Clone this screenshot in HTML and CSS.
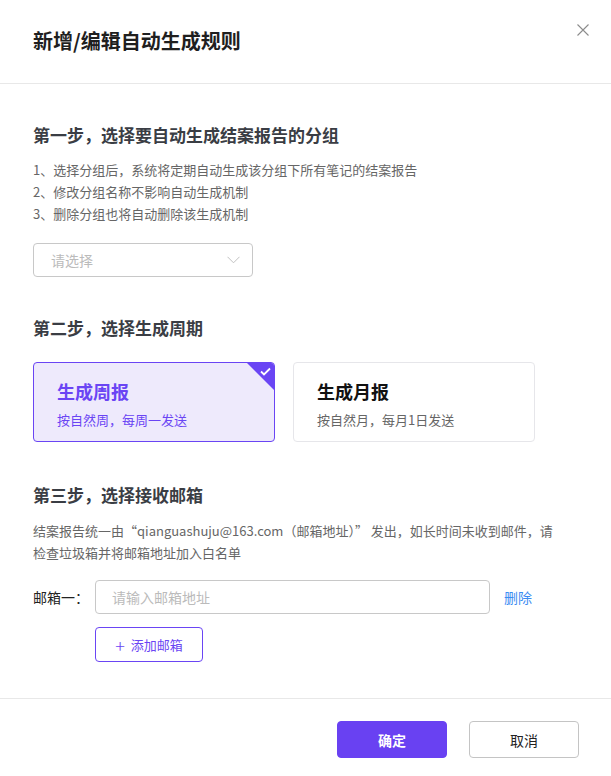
FILE: index.html
```html
<!DOCTYPE html>
<html lang="zh-CN">
<head>
  <meta charset="UTF-8">
  <title>新增/编辑自动生成规则</title>
  <link rel="stylesheet" href="styles.css">
</head>
<body>
  <div class="dialog">
    <div class="dialog-header">
      <h2 class="dialog-title">新增/编辑自动生成规则</h2>
      <span class="close">
        <svg width="12" height="12" viewBox="0 0 12 12"><path d="M0.5 0.5L11.5 11.5M11.5 0.5L0.5 11.5" stroke="#8c8c8c" stroke-width="1.1" fill="none"/></svg>
      </span>
    </div>

    <div class="dialog-body">
      <h3 class="step-title first">第一步，选择要自动生成结案报告的分组</h3>
      <div class="tips">
        <p>1、选择分组后，系统将定期自动生成该分组下所有笔记的结案报告</p>
        <p>2、修改分组名称不影响自动生成机制</p>
        <p>3、删除分组也将自动删除该生成机制</p>
      </div>
      <div class="select">
        <span class="placeholder">请选择</span>
        <svg width="13" height="8" viewBox="0 0 13 8"><path d="M0.5 0.8L6.5 6.8L12.5 0.8" stroke="#c0c0c0" stroke-width="1" fill="none"/></svg>
      </div>

      <h3 class="step-title">第二步，选择生成周期</h3>
      <div class="cards">
        <div class="card active">
          <div class="card-name">生成周报</div>
          <div class="card-desc">按自然周，每周一发送</div>
          <span class="corner"></span>
          <svg class="tick" width="11" height="9" viewBox="0 0 11 9"><path d="M1 4.5L4 7.5L10 1.5" stroke="#fff" stroke-width="1.8" fill="none"/></svg>
        </div>
        <div class="card">
          <div class="card-name">生成月报</div>
          <div class="card-desc">按自然月，每月1日发送</div>
        </div>
      </div>

      <h3 class="step-title">第三步，选择接收邮箱</h3>
      <p class="mail-tip">结案报告统一由“qianguashuju@163.com（邮箱地址）” 发出，如长时间未收到邮件，请检查垃圾箱并将邮箱地址加入白名单</p>
      <div class="mail-row">
        <label class="mail-label">邮箱一：</label>
        <input class="mail-input" type="text" placeholder="请输入邮箱地址">
        <a class="remove" href="#">删除</a>
      </div>
      <button class="add-btn" type="button"><span class="plus">+</span>添加邮箱</button>
    </div>

    <div class="dialog-footer">
      <button class="btn primary" type="button">确定</button>
      <button class="btn" type="button">取消</button>
    </div>
  </div>
</body>
</html>
```

FILE: styles.css
```css
* {
  box-sizing: border-box;
}
body {
  margin: 0;
  background: #fff;
  font-family: "Noto Sans CJK SC", "Noto Sans", sans-serif;
  color: #333;
}
.dialog {
  width: 611px;
  height: 776px;
  display: flex;
  flex-direction: column;
}
.dialog-header {
  height: 84px;
  border-bottom: 1px solid #e8e8e8;
  display: flex;
  justify-content: space-between;
  padding: 0 22px 0 33px;
}
.dialog-title {
  margin: 26px 0 0;
  font-size: 20px;
  line-height: 30px;
  font-weight: bold;
  color: #1f1f1f;
}
.close {
  margin-top: 24px;
  width: 12px;
  height: 12px;
  display: flex;
}
.dialog-body {
  flex: 1;
  padding: 0 33px;
}
.step-title {
  margin: 0;
  font-size: 17px;
  line-height: 26px;
  font-weight: bold;
  color: #3a3d44;
}
.step-title.first {
  margin-top: 38px;
}
.tips {
  margin-top: 11px;
}
.tips p {
  margin: 0;
  font-size: 13px;
  line-height: 22px;
  color: #666;
}
.select {
  margin: 18px 0 38px;
  width: 220px;
  height: 34px;
  border: 1px solid #c8c8c8;
  border-radius: 4px;
  display: flex;
  align-items: center;
  justify-content: space-between;
  padding: 0 12px 0 17px;
}
.placeholder {
  font-size: 14px;
  color: #bbb;
}
.cards {
  margin: 21px 0 40px;
  display: flex;
  gap: 18px;
}
.card {
  position: relative;
  width: 242px;
  height: 80px;
  border: 1px solid #e6e6ea;
  border-radius: 4px;
  padding: 14px 0 0 23px;
  overflow: hidden;
}
.card-name {
  font-size: 18px;
  line-height: 28px;
  font-weight: bold;
  color: #111;
}
.card-desc {
  margin-top: 6px;
  font-size: 13px;
  line-height: 18px;
  color: #666;
}
.card.active {
  background: #eeeafc;
  border-color: #6a45f4;
}
.card.active .card-name,
.card.active .card-desc {
  color: #6a45f4;
}
.corner {
  position: absolute;
  top: 0;
  right: 0;
  width: 27px;
  height: 27px;
  background: #6a45f4;
  clip-path: polygon(0 0, 100% 0, 100% 100%);
}
.tick {
  position: absolute;
  top: 4px;
  right: 3px;
}
.mail-tip {
  margin: 12px 0 0;
  max-width: 530px;
  font-size: 13px;
  line-height: 22px;
  color: #666;
}
.mail-row {
  margin-top: 16px;
  display: flex;
  align-items: center;
}
.mail-label {
  width: 62px;
  font-size: 14px;
  color: #222;
}
.mail-input {
  width: 395px;
  height: 34px;
  border: 1px solid #c8c8c8;
  border-radius: 4px;
  padding: 0 16px;
  font-family: inherit;
  font-size: 14px;
  outline: none;
}
.mail-input::placeholder {
  color: #bbb;
}
.remove {
  margin-left: 14px;
  font-size: 14px;
  color: #3c8cf2;
  text-decoration: none;
}
.add-btn {
  margin: 13px 0 0 62px;
  width: 108px;
  height: 35px;
  border: 1px solid #6a45f4;
  border-radius: 4px;
  background: #fff;
  color: #6a45f4;
  font-family: inherit;
  font-size: 13px;
  display: flex;
  align-items: center;
  justify-content: center;
  cursor: pointer;
}
.plus {
  font-size: 18px;
  font-weight: 300;
  margin-right: 6px;
  line-height: 1;
}
.dialog-footer {
  height: 78px;
  border-top: 1px solid #e8e8e8;
  display: flex;
  justify-content: flex-end;
  align-items: flex-start;
  gap: 22px;
  padding: 22px 32px 0 0;
}
.btn {
  width: 110px;
  height: 37px;
  border: 1px solid #c4c4c4;
  border-radius: 4px;
  background: #fff;
  font-family: inherit;
  font-size: 14px;
  color: #222;
  cursor: pointer;
}
.btn.primary {
  background: #6941f2;
  border-color: #6941f2;
  color: #fff;
  font-weight: bold;
}
```
